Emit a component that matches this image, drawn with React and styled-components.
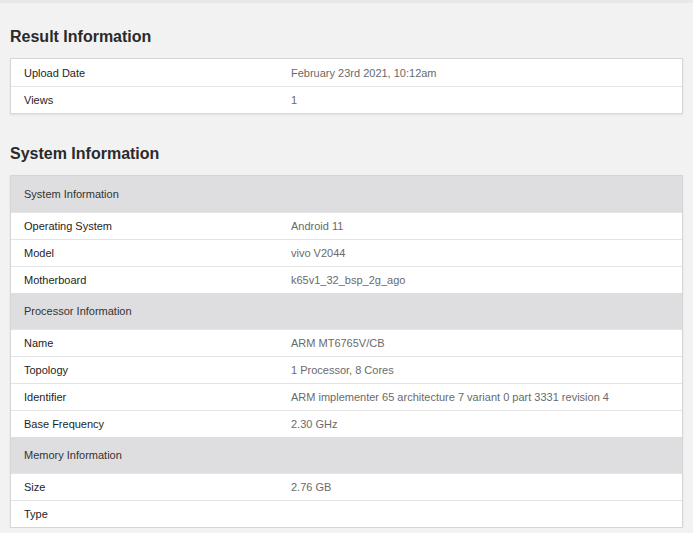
import React from 'react';
import styled, { createGlobalStyle } from 'styled-components';

const Global = createGlobalStyle`
  body {
    margin: 0;
    background: #f2f2f2;
    font-family: "Liberation Sans", Arial, sans-serif;
  }
`;

const result = [
  ['Upload Date', 'February 23rd 2021, 10:12am'],
  ['Views', '1'],
];

const system = [
  { header: 'System Information' },
  ['Operating System', 'Android 11'],
  ['Model', 'vivo V2044'],
  ['Motherboard', 'k65v1_32_bsp_2g_ago'],
  { header: 'Processor Information' },
  ['Name', 'ARM MT6765V/CB'],
  ['Topology', '1 Processor, 8 Cores'],
  ['Identifier', 'ARM implementer 65 architecture 7 variant 0 part 3331 revision 4'],
  ['Base Frequency', '2.30 GHz'],
  { header: 'Memory Information' },
  ['Size', '2.76 GB'],
  ['Type', ''],
];

const InfoTable = ({ rows }) => (
  <Table>
    {rows.map((r, i) =>
      r.header ? (
        <HeaderRow key={i}>{r.header}</HeaderRow>
      ) : (
        <Row key={i}>
          <Key>{r[0]}</Key>
          <Value>{r[1]}</Value>
        </Row>
      )
    )}
  </Table>
);

export default function App() {
  return (
    <Page>
      <Global />
      <Title>Result Information</Title>
      <InfoTable rows={result} />
      <Title $top='30px'>System Information</Title>
      <InfoTable rows={system} />
    </Page>
  );
}

const Page = styled.div`
  padding: 0 10px;
  border-top: 3px solid #e8e8e8;
`;
const Title = styled.h2`
  margin: ${(p) => p.$top || '24px'} 0 0 0;
  height: 31px;
  line-height: 20px;
  font-size: 16px;
  font-weight: bold;
  color: #2a2a2a;
`;
const Table = styled.div`
  background: #fff;
  border: 1px solid #d6d6d6;
  box-shadow: 0 1px 2px rgba(0, 0, 0, 0.08);
`;
const Row = styled.div`
  display: grid;
  grid-template-columns: 280px 1fr;
  height: 27px;
  align-items: center;
  font-size: 11px;
  border-top: 1px solid #e4e4e4;
  box-sizing: border-box;
  &:first-child { border-top: none; }
`;
const Key = styled.div`
  padding-left: 13px;
  color: #1e1e1e;
  font-weight: 500;
`;
const Value = styled.div`
  color: #6a6a6a;
  white-space: nowrap;
`;
const HeaderRow = styled.div`
  height: 36px;
  display: flex;
  align-items: center;
  padding-left: 13px;
  background: #dedee0;
  font-size: 11px;
  color: #333;
`;
